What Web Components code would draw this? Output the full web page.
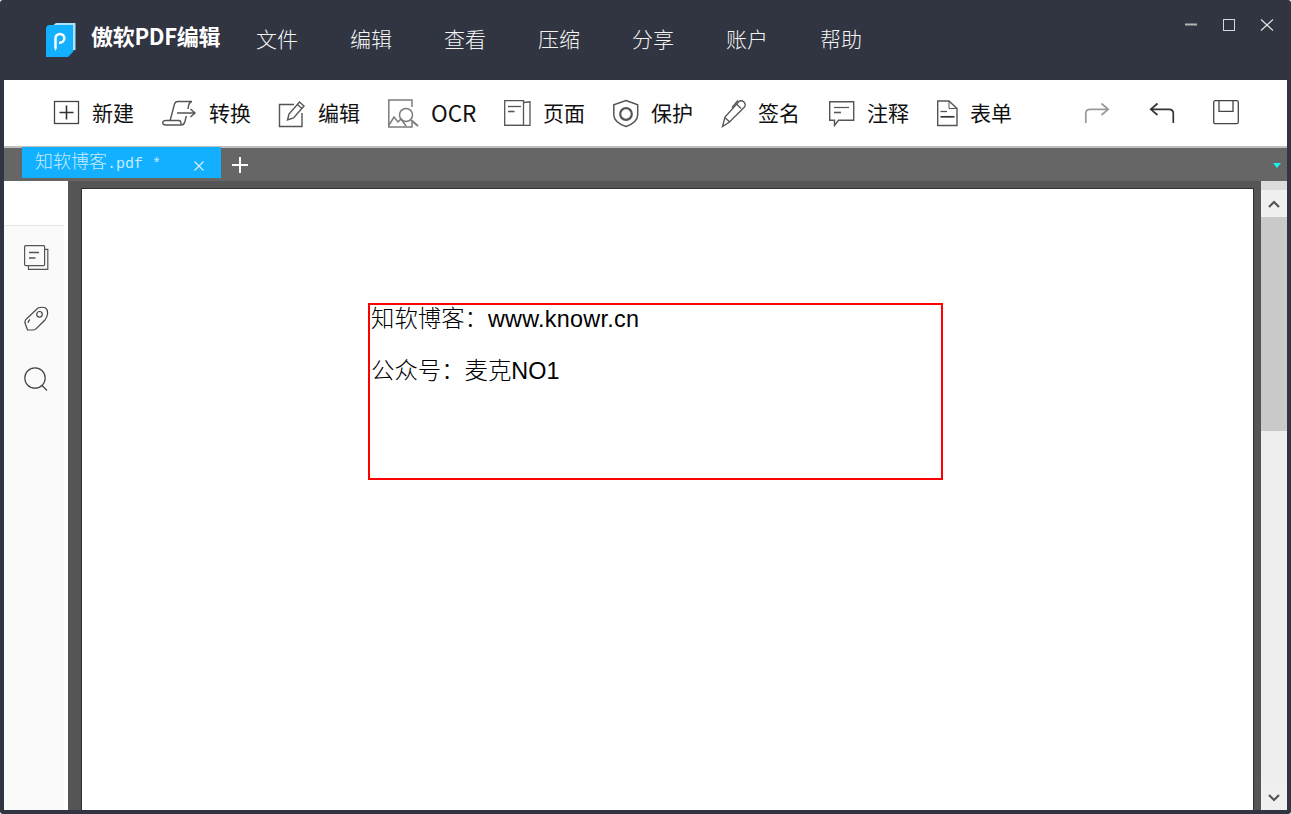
<!DOCTYPE html>
<html lang="zh"><head><meta charset="utf-8"><title>傲软PDF编辑</title>
<style>
html,body{margin:0;height:100%;background:#fff;overflow:hidden}
body{font-family:"Noto Sans CJK SC","Liberation Sans",sans-serif}
p span{font-weight:300}
p em{font-style:normal;letter-spacing:.25px}
</style></head><body>
<app-window>
  <title-bar></title-bar>
  <tool-bar></tool-bar>
  <tab-bar></tab-bar>
  <work-area>
    <pdf-page>
      <text-box>
        <p><span>知软博客：</span><em>www.knowr.cn</em></p>
        <p><span>公众号：麦克</span>NO1</p>
      </text-box>
    </pdf-page>
  </work-area>
</app-window>
<script>
const def=(name,html,init)=>customElements.define(name,class extends HTMLElement{
  constructor(){super();this.attachShadow({mode:'open'}).innerHTML=html;}
  connectedCallback(){init&&init(this)}
});
def('app-window',`<style>:host{display:flex;flex-direction:column;width:1291px;height:814px;box-sizing:border-box;background:#313441;border-radius:3px;padding:0 4px 4px 4px;overflow:hidden}</style><slot></slot>`);

def('title-bar',`<style>
:host{display:flex;align-items:flex-start;height:80px;margin:0 -4px;color:#fff;flex:none}
.logo{margin:23px 0 0 46px;flex:none;display:block}
b{font:700 22px/1 "Noto Sans CJK SC",sans-serif;margin:20px 0 0 15px;white-space:nowrap;width:129px;height:30px;line-height:30px;letter-spacing:-.3px;flex:none}
nav{display:flex;gap:52px;margin:23px 0 0 36px;flex:none}
nav span{font:300 21px/30px "Noto Sans CJK SC",sans-serif;width:42px;white-space:nowrap;color:#f4f4f4}
.ctl{margin-left:auto;display:flex;gap:26px;padding:18px 17px 0 0}
.ctl svg{display:block}
</style>
<svg class="logo" width="30" height="34" viewBox="0 0 30 34">
<path d="M6 3 L10 0 H29.5 V27 L24 28 Z" fill="#a9e1ff"/>
<path d="M4 2 H27 V29 L22 34 H0 V6 Q0 2 4 2Z" fill="#12b0ff"/>
<path d="M9.500 25 V15.300 A4.400 4.400 0 1 1 13.900 19.700 H13" fill="none" stroke="#fff" stroke-width="2.500"/>
<path d="M8.200 25 h2.600 l-1.300 3z" fill="#fff"/>
</svg>
<b>傲软PDF编辑</b>
<nav><span>文件</span><span>编辑</span><span>查看</span><span>压缩</span><span>分享</span><span>账户</span><span>帮助</span></nav>
<div class="ctl">
<svg width="12" height="14" viewBox="0 0 12 14"><path d="M0 6.500H12" stroke="#b4b4b4" stroke-width="2" fill="none"/></svg>
<svg width="12" height="14" viewBox="0 0 12 14"><rect x=".5" y="1.500" width="11" height="11" fill="none" stroke="#d8d8d8"/></svg>
<svg width="14" height="14" viewBox="0 0 14 14" style="margin-left:-1px"><path d="M1 1.500 L13 12.500M13 1.500L1 12.500" stroke="#e4e4e4" stroke-width="1.200" fill="none"/></svg>
</div>`);

customElements.define('tool-item',class extends HTMLElement{
  constructor(){super();this.attachShadow({mode:'open'}).innerHTML=`<style>
  :host{display:flex;align-items:center;height:66px;flex:none;color:#111;font:400 21px/30px "Noto Sans CJK SC",sans-serif;white-space:nowrap}
  .i{flex:none;height:30px;display:block}
  .t{position:relative;top:-1px}
  </style><div class="i"><slot name="i"></slot></div><span class="t"><slot></slot></span>`;}
  connectedCallback(){this.style.width=this.getAttribute('w')+'px';this.shadowRoot.querySelector('.i').style.width=this.getAttribute('b')+'px';}
});

def('tool-bar',`<style>
:host{display:flex;height:66px;background:#fff;padding-left:50px;flex:none;box-sizing:border-box}
svg{display:block;overflow:visible;fill:none}
.r{margin-left:auto;display:flex;padding-right:48px;align-items:flex-start;gap:39px;padding-top:20px}
.r svg{flex:none}
</style>
<tool-item w="108" b="38"><svg slot="i" width="30" height="30" style="fill:none;overflow:visible"><rect x=".5" y="3.500" width="24" height="22" stroke="#444" stroke-width="1.300"/><path d="M12.500 7.500V21.500M5.500 14.500H19.500" stroke="#333" stroke-width="1.600"/></svg>新建</tool-item>
<tool-item w="116" b="47"><svg slot="i" width="36" height="30" style="fill:none;overflow:visible" stroke="#555" stroke-width="1.400"><path d="M8 23L12.500 6Q13.300 3.500 16 3.500H30Q27.300 4 26.500 8L26 11"/><path d="M24.300 18L22.800 24Q22 27 19 27H4Q.5 27 .7 24.500Q1 22.500 4 22.500H17Q19 22.500 19 26"/><path d="M15 15H32M28.500 11L33 15L28.500 19"/></svg>转换</tool-item>
<tool-item w="110" b="40"><svg slot="i" width="30" height="30" style="fill:none;overflow:visible" stroke="#555" stroke-width="1.400"><path d="M16 6.500H1.500V28.500H24V15"/><path d="M9.500 22L11 16L21.500 4L26 8L15.500 20Z"/><path d="M19.500 6.500L24 10.500"/></svg>编辑</tool-item>
<tool-item w="116" b="43"><svg slot="i" width="32" height="30" style="fill:none;overflow:visible" stroke="#7c7c7c" stroke-width="1.500"><path d="M12 29H.8V2H24V9"/><path d="M24 24V29H12"/><path d="M1 27L6 19L10 24L13 21L18 28"/><circle cx="18" cy="17" r="6.500"/><path d="M23 22L30 28" stroke-width="2"/></svg><span style="font-size:22.500px">OCR</span></tool-item>
<tool-item w="108" b="39"><svg slot="i" width="28" height="30" style="fill:none;overflow:visible" stroke="#555" stroke-width="1.300"><path d="M.7 2.700H19.500V27.300H.7Z"/><path d="M19.500 4.500L26 3.800V27.300H.7" /><path d="M4 8.500H17"/><path d="M4 13.500H10.500" stroke-width="1.600"/></svg>页面</tool-item>
<tool-item w="109" b="39"><svg slot="i" width="28" height="30" style="fill:none;overflow:visible" stroke="#555"><path d="M14 2.500L25.700 6.800V17Q25.500 24.500 14 28.500Q2 24.500 1.800 17V6.800Z" stroke-width="1.500"/><circle cx="14" cy="16" r="5.800" stroke-width="2.200"/></svg>保护</tool-item>
<tool-item w="107" b="37"><svg slot="i" width="26" height="30" style="fill:none;overflow:visible" stroke="#555" stroke-width="1.300"><path d="M1.500 28.500L4 19L17.500 4Q20 1.500 23 4Q25.500 7 23 9.500L8.500 24Z"/><path d="M3.800 19.500L8.800 24M17 2.500L11 9.500M15.500 6L20 10.500"/></svg>签名</tool-item>
<tool-item w="108" b="39"><svg slot="i" width="28" height="30" style="fill:none;overflow:visible" stroke="#555" stroke-width="1.400"><path d="M1.700 3.700H25.700V22.300H10.500L6.500 27.500V22.300H1.700Z"/><path d="M6 9.500H21" stroke-width="1.200"/><path d="M6 14.500H13" stroke-width="1.600"/></svg>注释</tool-item>
<tool-item w="108" b="34"><svg slot="i" width="22" height="30" style="fill:none;overflow:visible" stroke="#555" stroke-width="1.400"><path d="M1.700 3H13L21 10.500V27.500H1.700Z"/><path d="M13 3V10.500H21" stroke-width="1"/><path d="M4.500 13.500H11" stroke-width="1.300"/><path d="M4.500 18.800H18.500" stroke="#333" stroke-width="1.700"/></svg>表单</tool-item>
<div class="r">
<svg width="25" height="30" stroke="#999" stroke-width="1.500"><path d="M.8 23V13.500Q.8 9.300 5 9.300H23M16.500 3.500L23.200 9.300L16.500 15" stroke-width="1.700"/></svg>
<svg width="25" height="30" stroke="#333" stroke-width="1.500"><path d="M24.300 23V13.500Q24.300 9.300 20 9.300H2M8.500 3.500L1.800 9.300L8.500 15" stroke-width="1.700"/></svg>
<svg width="26" height="30" stroke="#444" stroke-width="1.300"><rect x=".7" y=".7" width="24.600" height="23" rx="1.500"/><path d="M6 1V11.300H20V1"/></svg>
</div>`);

def('tab-bar',`<style>
:host{display:flex;align-items:flex-start;height:35px;flex:none;background:#666;border-top:2px solid #c0c0c0;box-sizing:border-box}
.tab{margin:-1px 0 0 18px;width:199px;height:31px;background:#12b0ff;color:#c6ecff;display:flex;align-items:baseline;padding:0 0 0 13px;box-sizing:border-box;white-space:nowrap}
.tab span{font:300 18px/27px "Noto Sans CJK SC",sans-serif;width:72px;flex:none}
.tab i{font:400 15px/27px "Liberation Mono",monospace;white-space:pre;flex:none}
.x{flex:none;margin:0 0 0 33px;align-self:flex-start;margin-top:14px;display:block}
.plus{margin:9px 0 0 11px;flex:none;display:block}
.tri{margin:15px 6px 0 auto;flex:none;width:0;height:0;border:4.500px solid transparent;border-top:5px solid #19f0f0;border-bottom:0}
</style>
<div class="tab"><span>知软博客</span><i>.pdf *</i><svg class="x" width="10" height="10"><path d="M.5 .5L9.500 9.500M9.500 .5L.5 9.500" stroke="#d8f2ff" stroke-width="1.100" fill="none"/></svg></div>
<svg class="plus" width="16" height="16"><path d="M8 0V16M0 8H16" stroke="#fff" stroke-width="2" fill="none"/></svg>
<div class="tri"></div>`);

def('side-bar',`<style>
:host{display:flex;flex-direction:column;width:60px;flex:none;background:#fff}
.top{height:44px;border-bottom:1px solid #e4e4e4;flex:none}
.list{flex:1;background:#fafafa;display:flex;flex-direction:column;padding:19px 0 0 20px;gap:36px;box-sizing:border-box}
svg{display:block;fill:none}
</style>
<div class="top"></div>
<div class="list">
<svg width="26" height="25" stroke="#555" stroke-width="1.200"><rect x=".6" y=".6" width="20" height="20" rx="1"/><path d="M4.500 21V24.400H23.800V4.400H20.800"/><path d="M5 7.500H15M5 13H11.500" stroke-width="1.400"/></svg>
<svg width="26" height="25" stroke="#444" stroke-width="1.200"><path d="M14 2Q18 .5 21.500 2Q24 4 23.500 8Q23 11.500 21 14L12 22.800Q11.300 24 9.500 24H3.500L1 17Q.5 14 3 12.500Z"/><circle cx="15.500" cy="8.300" r="2.800"/><path d="M4 17Q4.500 14.500 6 13.500"/></svg>
<svg width="26" height="25" stroke="#444" stroke-width="1.200"><circle cx="11" cy="11" r="10.200"/><path d="M18 18.500L23 23.500"/></svg>
</div>`);

def('scroll-bar',`<style>
:host{display:flex;flex-direction:column;width:26px;flex:none;background:#eee}
.cap{height:9px;background:#dcdcdc;flex:none}
.b{height:27px;flex:none;display:flex;align-items:center;justify-content:center;background:#f0f0f0}
.th{height:214px;background:#c9c9c9;flex:none}
.f{flex:1}
svg{display:block}
</style><div class="cap"></div>
<div class="b"><svg width="12" height="8"><path d="M1 7L6 2L11 7" stroke="#555" stroke-width="2.200" fill="none"/></svg></div>
<div class="th"></div><div class="f"></div>
<div class="b" style="align-items:flex-start;padding-top:11px;box-sizing:border-box"><svg width="12" height="8"><path d="M1 1L6 6L11 1" stroke="#555" stroke-width="2.200" fill="none"/></svg></div>`);

def('work-area',`<style>
:host{display:flex;flex:1;min-height:0;background:#555}
.m{flex:1;min-width:0;padding:7px 7px 0 13px;display:flex}
</style><side-bar></side-bar><div style="width:4px;background:#fff;flex:none"></div><div class="m"><slot></slot></div><scroll-bar></scroll-bar>`);

def('pdf-page',`<style>
:host{display:block;flex:1;background:#fff;border:1px solid #2e2e2e;border-bottom:0;padding:114px 0 0 286px;box-sizing:border-box}
</style><slot></slot>`);

def('text-box',`<style>
:host{display:block;width:575px;height:177px;box-sizing:border-box;border:2px solid #f00;padding:1px 0 0 1px;color:#000;font:23.400px/26px "Liberation Sans","Noto Sans CJK SC",sans-serif}
::slotted(p){margin:0 0 26px;white-space:nowrap;font-weight:400}
</style><slot></slot>`);
</script>
</body></html>
